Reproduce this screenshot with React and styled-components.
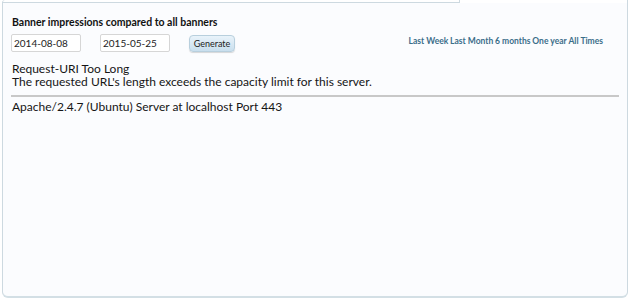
import styled, { createGlobalStyle } from 'styled-components';

const GlobalStyle = createGlobalStyle`
  html, body {
    margin: 0;
    padding: 0;
    background: #fff;
  }
  body {
    font-family: Lato, "Open Sans", sans-serif;
    color: #111;
  }
`;

const Page = styled.div`
  width: 630px;
  height: 300px;
  padding: 0 2px 2px 2px;
  box-sizing: border-box;
  display: flex;
  flex-direction: column;
`;

const TabStrip = styled.div`
  display: flex;
  height: 3px;
`;

const TabGap = styled.div`
  flex: 1;
  border-bottom: 1px solid #cdd9e0;
  border-left: 1px solid #cdd9e0;
  border-top-left-radius: 4px;
`;

const ActiveTab = styled.div`
  width: 167px;
  border-left: 1px solid #cdd9e0;
  border-right: 1px solid #cdd9e0;
  background: #fff;
`;

const Panel = styled.div`
  flex: 1;
  background: #fbfcfe;
  border: 1px solid #cdd9e0;
  border-top: none;
  border-bottom: 2px solid #d3dfe5;
  border-radius: 0 0 6px 6px;
  padding: 13px 8px 0 8px;
`;

const Title = styled.div`
  font-size: 10.5px;
  font-weight: bold;
  padding-left: 1px;
  height: 14px;
`;

const Toolbar = styled.div`
  display: flex;
  align-items: center;
  margin-top: 3px;
  height: 19px;
`;

const DateInput = styled.input`
  width: 70px;
  height: 18px;
  box-sizing: border-box;
  border: 1px solid #d6d6d6;
  border-radius: 2px;
  background: #fff;
  font: 10px Lato, sans-serif;
  padding: 0 2px;
  margin-right: ${p => p.$gap || 0}px;
  color: #222;
`;

const Button = styled.button`
  height: 17px;
  width: 46px;
  margin-top: 2px;
  border: 1px solid #b8cfdd;
  border-radius: 4px;
  background: linear-gradient(#e9f3fa, #c9dfee);
  box-shadow: 0 1px 1px rgba(0, 0, 0, 0.15);
  font: 9px Lato, sans-serif;
  color: #222;
  padding: 0;
`;

const Ranges = styled.div`
  margin-left: auto;
  margin-right: 16px;
  margin-top: -4px;
  display: flex;
  gap: 1.8px;
`;

const RangeLink = styled.a`
  font-size: 8.5px;
  font-weight: bold;
  color: #3b6e8a;
  text-decoration: none;
  cursor: pointer;
`;

const Message = styled.div`
  margin-top: ${p => p.$top || 0}px;
  font-size: 12px;
  line-height: 12.5px;
  padding-left: 1px;
  color: #151515;
`;

const Divider = styled.hr`
  margin: 7px 0 4px 0;
  border: none;
  border-top: 2px solid #c8c8c8;
`;

const ranges = ['Last Week', 'Last Month', '6 months', 'One year', 'All Times'];

export default function App() {
  return (
    <>
      <GlobalStyle />
      <Page>
        <TabStrip>
          <TabGap />
          <ActiveTab />
        </TabStrip>
        <Panel>
          <Title>Banner impressions compared to all banners</Title>
          <Toolbar>
            <DateInput defaultValue="2014-08-08" $gap={19} />
            <DateInput defaultValue="2015-05-25" $gap={19} />
            <Button>Generate</Button>
            <Ranges>
              {ranges.map(r => (
                <RangeLink key={r}>{r}</RangeLink>
              ))}
            </Ranges>
          </Toolbar>
          <Message $top={11}>
            Request-URI Too Long
            <br />
            The requested URL's length exceeds the capacity limit for this server.
          </Message>
          <Divider />
          <Message>Apache/2.4.7 (Ubuntu) Server at localhost Port 443</Message>
        </Panel>
      </Page>
    </>
  );
}
